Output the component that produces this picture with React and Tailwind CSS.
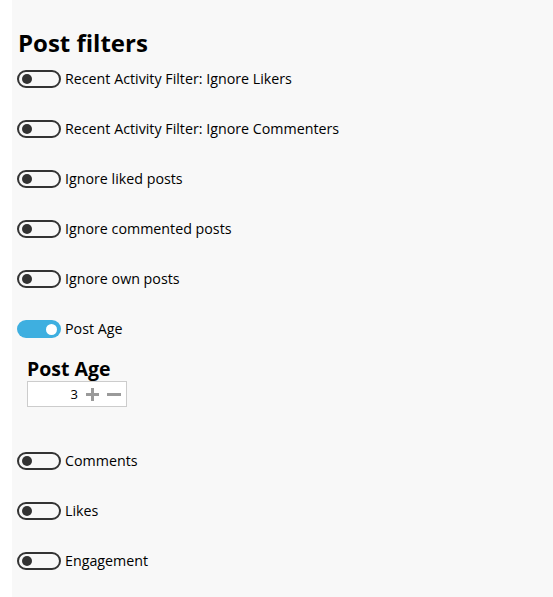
import React from "react";

const font = { fontFamily: '"Segoe UI", "Open Sans", "Noto Sans", sans-serif' };

function Toggle({ on }) {
  return on ? (
    <div className="flex h-[18px] w-[44px] shrink-0 items-center justify-end rounded-full bg-[#3eafe0] pr-[4px]">
      <div className="h-[11px] w-[11px] rounded-full bg-white" />
    </div>
  ) : (
    <div className="flex h-[18px] w-[44px] shrink-0 items-center rounded-full border-2 border-[#333333] pl-[3px]">
      <div className="h-[10px] w-[10px] rounded-full bg-[#333333]" />
    </div>
  );
}

function Row({ label, on }) {
  return (
    <div className="flex h-[20px] items-center gap-[4px]">
      <Toggle on={on} />
      <span className="text-[14.25px] leading-[20px] text-black">{label}</span>
    </div>
  );
}

export default function App() {
  return (
    <div className="min-h-[597px] bg-white pl-[12px]" style={font}>
      <div className="min-h-[597px] bg-[#f8f8f8] pl-[5px] pt-[27px]">
        <h2 className="ml-[1px] text-[24px] font-bold leading-[32px] text-black">Post filters</h2>
        <div className="mt-[10px] flex flex-col gap-[30px]">
          <Row label="Recent Activity Filter: Ignore Likers" />
          <Row label="Recent Activity Filter: Ignore Commenters" />
          <Row label="Ignore liked posts" />
          <Row label="Ignore commented posts" />
          <Row label="Ignore own posts" />
          <Row label="Post Age" on />
        </div>
        <div className="mt-[19px] pl-[10px]">
          <h3 className="text-[19.5px] font-bold leading-[22px] text-black">Post Age</h3>
          <div className="mt-[1px] flex h-[26px] w-[100px] items-center border border-[#cccccc] bg-white">
            <span className="flex-1 pr-[7px] text-right text-[13px] leading-[24px] text-black">3</span>
            <div className="flex items-center gap-[6px] pr-[5px]">
              <svg width="15" height="15" viewBox="0 0 15 15">
                <path d="M7.5 1v13M1 7.5h13" stroke="#9a9a9a" strokeWidth="3" />
              </svg>
              <svg width="15" height="15" viewBox="0 0 15 15">
                <path d="M1 7.5h14" stroke="#9a9a9a" strokeWidth="3" />
              </svg>
            </div>
          </div>
        </div>
        <div className="mt-[44px] flex flex-col gap-[30px]">
          <Row label="Comments" />
          <Row label="Likes" />
          <Row label="Engagement" />
        </div>
      </div>
    </div>
  );
}
